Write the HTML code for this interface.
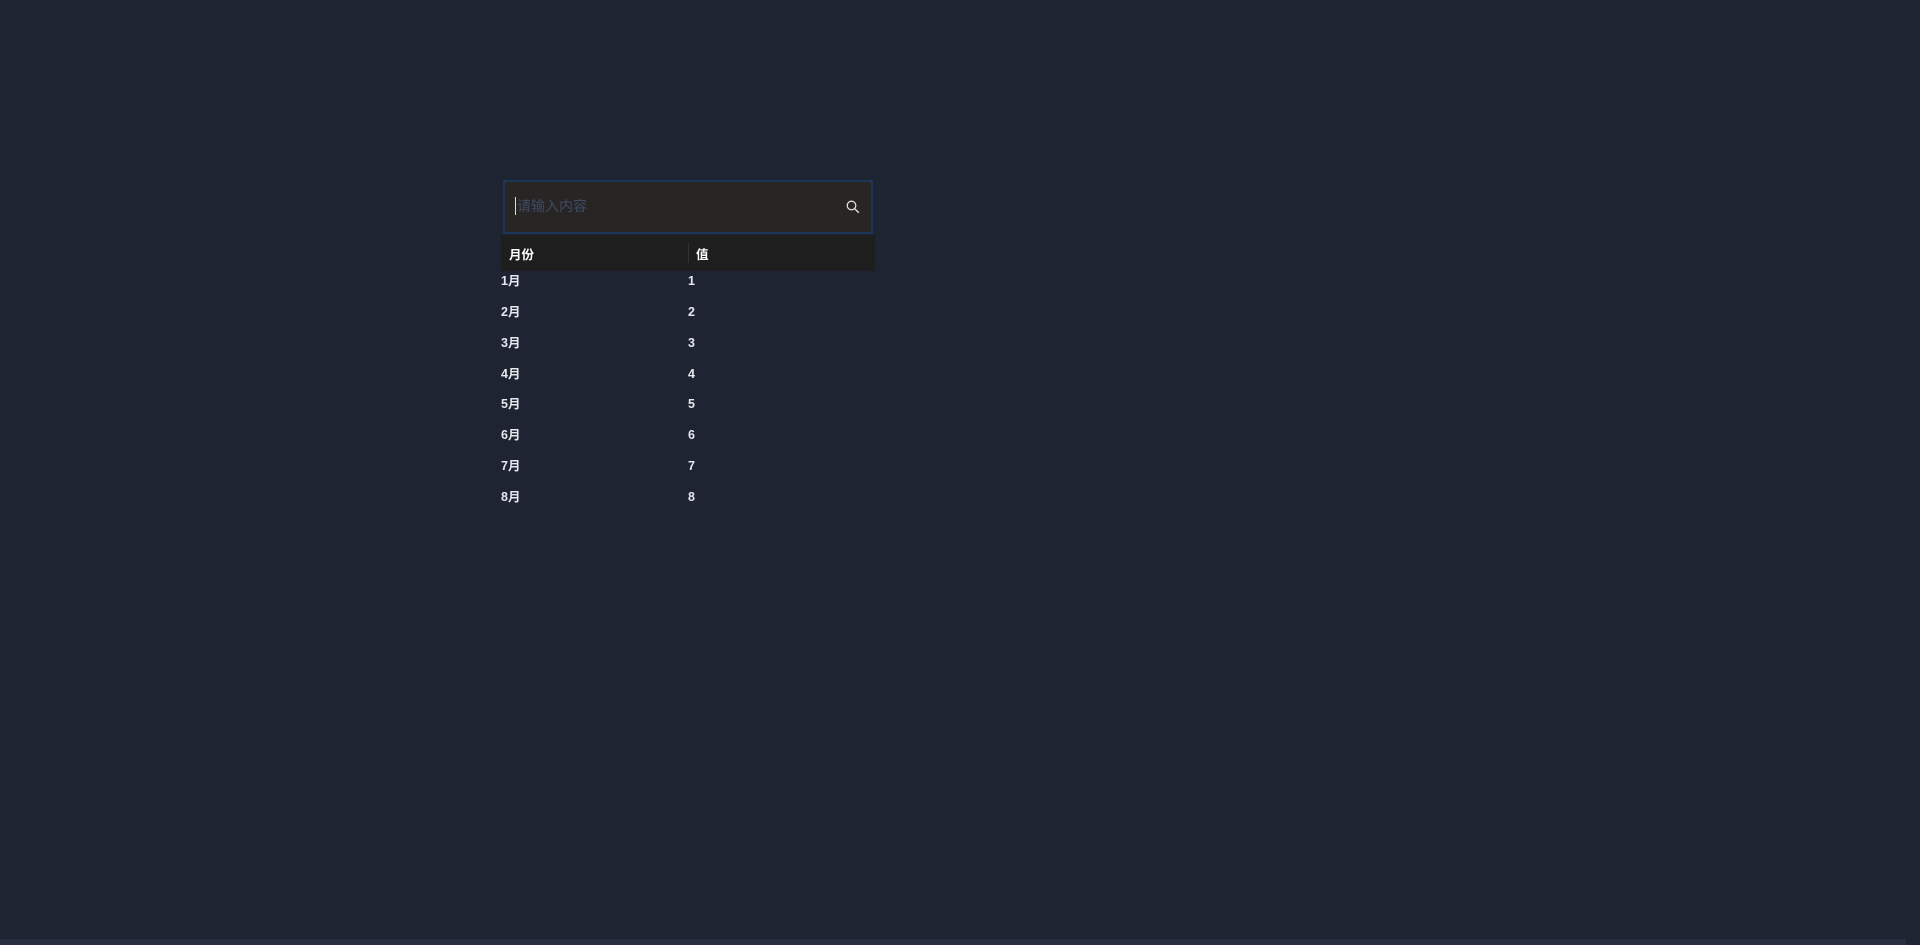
<!DOCTYPE html>
<html><head><meta charset="utf-8"><style>
html,body{margin:0;padding:0;width:1920px;height:945px;overflow:hidden;background:#1f2432;font-family:"Liberation Sans","Noto Sans CJK SC",sans-serif;}
.inp{position:absolute;left:503px;top:180px;width:366px;height:50px;background:#282625;border:2px solid #1d3559;}
.ph{position:absolute;left:12px;top:15px;font-size:14px;color:#3f4a63;line-height:18px;}
.caret{position:absolute;left:10px;top:15px;width:1px;height:18px;background:#ddd;}
.hdr{position:absolute;left:501px;top:235px;width:374px;height:36px;background:#1e1e1e;}
.hdr span{position:absolute;top:9px;font-size:12.5px;font-weight:bold;color:#fff;}
.div{position:absolute;left:187px;top:8px;width:1px;height:20px;background:#333;}
.row{position:absolute;left:501px;font-size:12.5px;font-weight:bold;color:#e6e8ee;height:18px;line-height:18px;}
.row b{position:absolute;left:187px;}
.bar{position:absolute;left:0;top:939px;width:1906px;height:6px;background:#2a2f3f;}
</style></head><body>
<div class="inp"><div class="caret"></div><div class="ph">请输入内容</div>
<svg style="position:absolute;left:341px;top:18px" width="14" height="14" viewBox="0 0 14 14"><circle cx="5.5" cy="5.5" r="4.3" fill="none" stroke="#ddd" stroke-width="1.3"/><path d="M8.7 8.7L12.8 12.8" stroke="#ddd" stroke-width="1.4"/></svg></div>
<div class="hdr"><span style="left:8px">月份</span><div class="div"></div><span style="left:195px">值</span></div>
<div class="row" style="top:272px">1月<b>1</b></div>
<div class="row" style="top:303px">2月<b>2</b></div>
<div class="row" style="top:334px">3月<b>3</b></div>
<div class="row" style="top:365px">4月<b>4</b></div>
<div class="row" style="top:395px">5月<b>5</b></div>
<div class="row" style="top:426px">6月<b>6</b></div>
<div class="row" style="top:457px">7月<b>7</b></div>
<div class="row" style="top:488px">8月<b>8</b></div>
<div class="bar"></div>
</body></html>
